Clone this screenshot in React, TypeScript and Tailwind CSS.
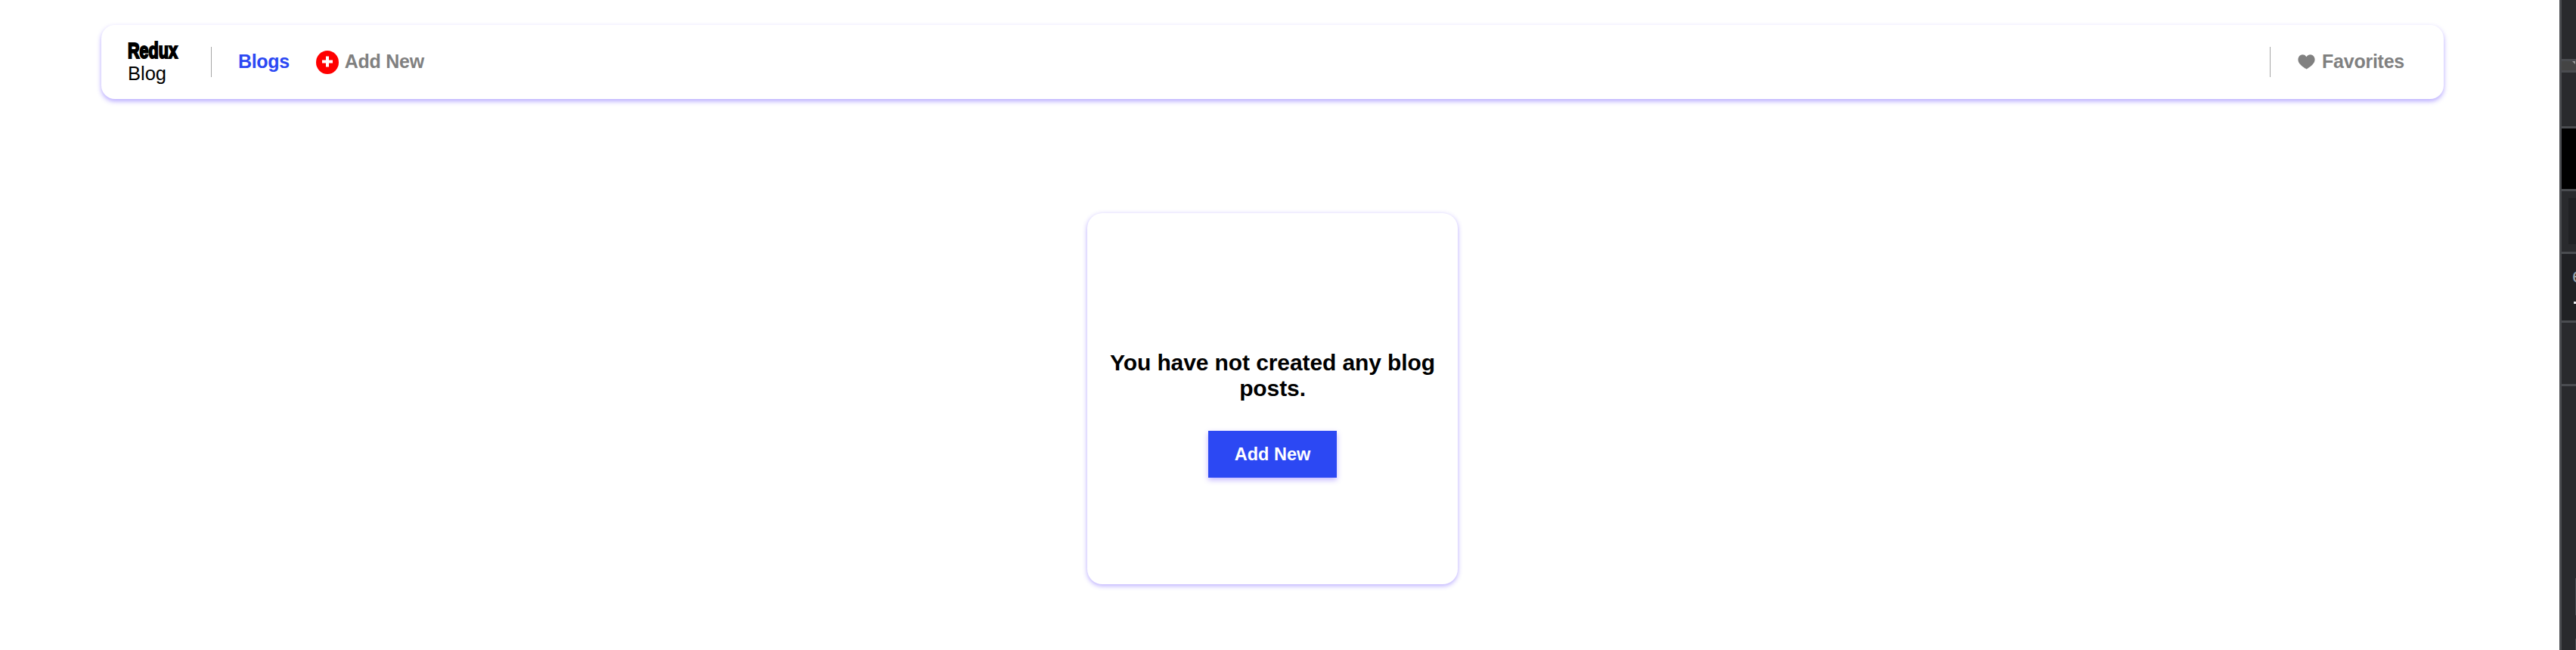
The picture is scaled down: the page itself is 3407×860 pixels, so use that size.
import React from "react";

function Divider() {
  return <span className="h-10 w-px shrink-0 bg-[#a6a6a6]" />;
}

function PlusCircle() {
  return (
    <svg className="h-[31px] w-[30px] shrink-0" viewBox="0 0 30 31" preserveAspectRatio="none">
      <ellipse cx="15" cy="15.5" rx="15" ry="15.5" fill="#ff0000" />
      <path d="M13 7.5h4v5h5v4h-5v5h-4v-5H8v-4h5z" fill="#fff" />
    </svg>
  );
}

function Heart() {
  return (
    <svg className="h-5 w-[23px] shrink-0" viewBox="0 0 23 20">
      <path
        d="M11.5 3.2C9.8.3 6.3-.4 3.6 1 .8 2.600-.3 6.200.9 9.400c1.500 4 6 7.200 10.600 10.100 4.600-2.900 9.100-6.100 10.600-10.100C23.300 6.200 22.200 2.600 19.400 1c-2.700-1.400-6.200-.700-7.900 2.200z"
        fill="#808080"
      />
    </svg>
  );
}

function Navbar() {
  return (
    <nav className="flex h-[98px] w-full items-center rounded-[18px] bg-white pl-[35px] pr-[52px] shadow-[0_3px_6px_rgba(76,40,255,0.4)]">
      <div className="flex w-[110px] shrink-0 flex-col text-[25.500px] leading-[30px] text-black">
        <span className="origin-left scale-x-[0.72] whitespace-nowrap text-[30px] font-bold [-webkit-text-stroke:2.200px_black]">
          Redux
        </span>
        <span>Blog</span>
      </div>
      <Divider />
      <a className="ml-[35px] text-[25px] font-bold tracking-[-0.35px] text-[#2c48f3]">Blogs</a>
      <a className="ml-[35px] flex items-center gap-2 text-[25px] font-bold tracking-[-0.25px] text-[#808080]">
        <PlusCircle />
        Add New
      </a>
      <span className="flex-1" />
      <Divider />
      <a className="ml-9 flex items-center gap-[9px] text-[25px] font-bold tracking-[-0.25px] text-[#808080]">
        <Heart />
        Favorites
      </a>
    </nav>
  );
}

function EmptyCard() {
  return (
    <section className="flex h-[491px] w-[490px] flex-col items-center rounded-[20px] bg-white px-[25px] pt-[181px] shadow-[0_2px_6px_rgba(76,40,255,0.4)]">
      <h2 className="text-center text-[30px] font-bold leading-[34px] tracking-[-0.1px] text-black">
        You have not created any blog posts.
      </h2>
      <button className="mt-[39px] h-[62px] w-[170px] bg-[#2c48f3] pt-0.5 text-[23.500px] font-bold text-white shadow-[0_3px_7px_rgba(76,40,255,0.35)]">
        Add New
      </button>
    </section>
  );
}

function SidePanel() {
  return (
    <aside className="flex h-[860px] w-[22px] shrink-0 flex-col gap-[3px] overflow-hidden bg-[#4a4c50] pl-[3px]">
      <div className="h-[78px] shrink-0 bg-[#292a2d]" />
      <div className="flex h-3 shrink-0 justify-end bg-[#444444] pr-px">
        <svg className="h-1 w-1" viewBox="0 0 4 4">
          <path d="M0 0h4v4z" fill="#9a9a9a" />
        </svg>
      </div>
      <div className="h-[71px] shrink-0 bg-[#292a2d]" />
      <div className="h-20 shrink-0 bg-black" />
      <div className="h-20 shrink-0 bg-[#292a2d] pb-2.5 pl-[9px] pt-[9px]">
        <div className="h-full bg-[#202124]" />
      </div>
      <div className="flex h-[88px] shrink-0 flex-col bg-[#202124] pl-[14px] pt-[14px]">
        <span className="text-[27px] leading-[30px] text-[#9aa0a6]">e</span>
        <span className="ml-0.5 mt-[19px] h-[3px] w-[3px] bg-[#e8eaed]" />
      </div>
      <div className="h-[81px] shrink-0 bg-[#292a2d]" />
      <div className="flex flex-1 flex-col items-end bg-[#292a2d] pt-[254px]">
        <span className="h-[49px] w-px bg-[#4a4c50]" />
        <span className="mt-[31px] h-[15px] w-px bg-[#4a4c50]" />
      </div>
    </aside>
  );
}

export default function App() {
  return (
    <div className="flex h-[860px] w-[3407px] overflow-hidden bg-white font-['Liberation_Sans',Arial,sans-serif]">
      <main className="flex flex-1 flex-col items-center pl-[134px] pr-[153px] pt-[33px]">
        <Navbar />
        <div className="mt-[151px]">
          <EmptyCard />
        </div>
      </main>
      <SidePanel />
    </div>
  );
}
